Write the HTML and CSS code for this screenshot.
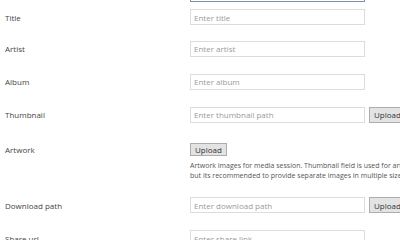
FILE: index.html
```html
<html>
<head>
  <meta name=viewport content='width=400' />
  <link rel="stylesheet" href="styles.css">
</head>
<body>
<div class="top-field">
  <input class="text-input focused" type="text" value="gyg">
</div>

<div class="row first">
  <label class="label">Title</label>
  <input class="text-input" type="text" placeholder="Enter title">
</div>
<div class="row">
  <label class="label">Artist</label>
  <input class="text-input" type="text" placeholder="Enter artist">
</div>
<div class="row">
  <label class="label">Album</label>
  <input class="text-input" type="text" placeholder="Enter album">
</div>
<div class="row">
  <label class="label">Thumbnail</label>
  <input class="text-input" type="text" placeholder="Enter thumbnail path">
  <button class="upload">Upload</button>
</div>
<div class="row artwork">
  <div class="artwork-head">
    <label class="label">Artwork</label>
    <button class="upload">Upload</button>
  </div>
  <p class="hint">Artwork images for media session. Thumbnail field is used for artwork by default,<br>but its recommended to provide separate images in multiple sizes.</p>
</div>
<div class="row">
  <label class="label">Download path</label>
  <input class="text-input" type="text" placeholder="Enter download path">
  <button class="upload">Upload</button>
</div>
<div class="row">
  <label class="label">Share url</label>
  <input class="text-input" type="text" placeholder="Enter share link">
</div>
</body>
</html>
```

FILE: styles.css
```css
body {
  margin: 0;
  background: #fff;
  font-family: "Open Sans", "Noto Sans", sans-serif;
  font-size: 8px;
  color: #444;
  overflow: hidden;
  width: 400px;
  white-space: nowrap;
}
.top-field {
  margin-top: -14px;
  padding-left: 190px;
  height: 16px;
}
.row {
  display: flex;
  align-items: center;
  height: 33px;
}
.row.first {
  height: 30px;
}
.label {
  width: 185px;
  padding-left: 5px;
  flex-shrink: 0;
}
.text-input {
  box-sizing: border-box;
  width: 175px;
  height: 16px;
  border: 1px solid #dcdcdc;
  padding: 0 3px;
  font-family: inherit;
  font-size: 8px;
  color: #333;
  outline: none;
  flex-shrink: 0;
}
.text-input::placeholder {
  color: #9a9a9a;
}
.text-input.focused {
  border-color: #7f8ea6;
}
.upload {
  box-sizing: border-box;
  height: 16px;
  margin-left: 4px;
  padding: 0 4px;
  border: 1px solid #adadad;
  border-radius: 0;
  background: #e3e3e3;
  font-family: inherit;
  font-size: 8px;
  color: #333;
  flex-shrink: 0;
}
.row.artwork {
  display: block;
  height: 57.5px;
}
.artwork-head {
  display: flex;
  align-items: center;
  height: 30px;
  padding-top: 7px;
  box-sizing: border-box;
}
.artwork-head .upload {
  margin-left: 0;
  height: 13px;
}
.hint {
  margin: 0 0 0 190px;
  font-size: 7px;
  line-height: 10px;
  color: #555;
}
```
